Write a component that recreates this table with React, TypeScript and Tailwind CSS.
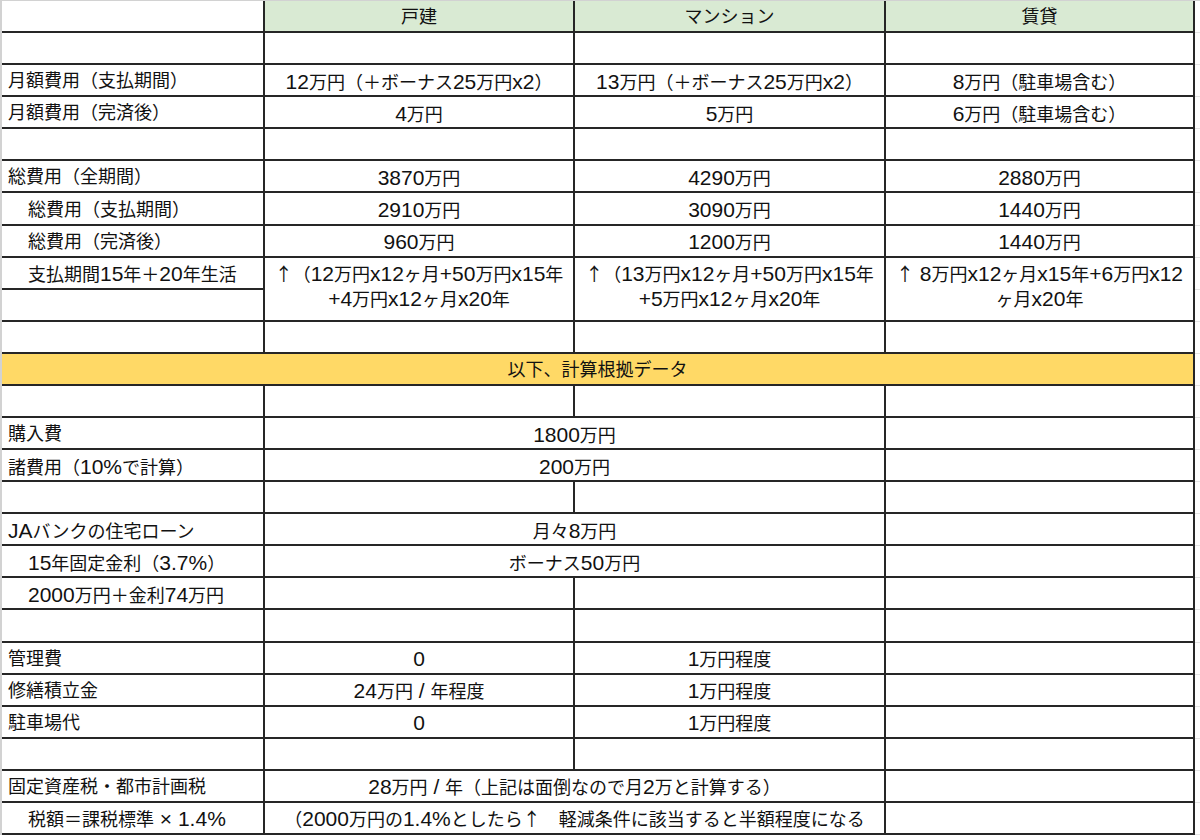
import type { ReactNode } from 'react';

type Cell = {
  text?: string;
  second?: string;
  span?: 2 | 4;
  left?: boolean;
  indent?: boolean;
  bg?: 'green' | 'yellow';
};

// the sheet renders latin runs a bit larger than the kana/kanji around them,
// and the arrow comes from the CJK font
const RUNS = /([0-9A-Za-z.%+/× ]+|↑)/;

function Mixed({ text }: { text: string }): ReactNode {
  return text.split(RUNS).map((part, i) => {
    if (i % 2 === 0) return part;
    if (part === '↑')
      return (
        <span key={i} className="font-['Noto_Sans_CJK_JP',sans-serif]">
          {part}
        </span>
      );
    return (
      <span key={i} className="text-[21px]">
        {part}
      </span>
    );
  });
}

const label = (text: string, indent = false): Cell => ({ text, left: true, indent });
const empty: Cell = {};

const ROWS: Cell[][] = [
  [empty, { text: '戸建', bg: 'green' }, { text: 'マンション', bg: 'green' }, { text: '賃貸', bg: 'green' }],
  [empty, empty, empty, empty],
  [label('月額費用（支払期間）'), { text: '12万円（＋ボーナス25万円x2）' }, { text: '13万円（＋ボーナス25万円x2）' }, { text: '8万円（駐車場含む）' }],
  [label('月額費用（完済後）'), { text: '4万円' }, { text: '5万円' }, { text: '6万円（駐車場含む）' }],
  [empty, empty, empty, empty],
  [label('総費用（全期間）'), { text: '3870万円' }, { text: '4290万円' }, { text: '2880万円' }],
  [label('総費用（支払期間）', true), { text: '2910万円' }, { text: '3090万円' }, { text: '1440万円' }],
  [label('総費用（完済後）', true), { text: '960万円' }, { text: '1200万円' }, { text: '1440万円' }],
  [
    label('支払期間15年＋20年生活', true),
    { text: '↑（12万円x12ヶ月+50万円x15年', second: '+4万円x12ヶ月x20年' },
    { text: '↑（13万円x12ヶ月+50万円x15年', second: '+5万円x12ヶ月x20年' },
    { text: '↑ 8万円x12ヶ月x15年+6万円x12', second: 'ヶ月x20年' },
  ],
  [empty],
  [empty, empty, empty, empty],
  [{ text: '以下、計算根拠データ', span: 4, bg: 'yellow' }],
  [empty, empty, empty, empty],
  [label('購入費'), { text: '1800万円', span: 2 }, empty],
  [label('諸費用（10%で計算）'), { text: '200万円', span: 2 }, empty],
  [empty, empty, empty, empty],
  [label('JAバンクの住宅ローン'), { text: '月々8万円', span: 2 }, empty],
  [label('15年固定金利（3.7%）', true), { text: 'ボーナス50万円', span: 2 }, empty],
  [label('2000万円＋金利74万円', true), empty, empty, empty],
  [empty, empty, empty, empty],
  [label('管理費'), { text: '0' }, { text: '1万円程度' }, empty],
  [label('修繕積立金'), { text: '24万円 / 年程度' }, { text: '1万円程度' }, empty],
  [label('駐車場代'), { text: '0' }, { text: '1万円程度' }, empty],
  [empty, empty, empty, empty],
  [label('固定資産税・都市計画税'), { text: '28万円 / 年（上記は面倒なので月2万と計算する）', span: 2 }, empty],
  [
    label('税額＝課税標準 × 1.4%', true),
    { text: '（2000万円の1.4%としたら↑　軽減条件に該当すると半額程度になる', span: 2 },
    empty,
  ],
];

function SheetCell({ cell }: { cell: Cell }) {
  const classes = ['flex overflow-hidden whitespace-nowrap border-r-2 border-b-2 border-[#262626]'];

  if (cell.span === 2) classes.push('col-span-2');
  if (cell.span === 4) classes.push('col-span-4');
  if (cell.second) classes.push('row-span-2 flex-col items-center justify-start pt-[4px] leading-[23px]');
  else if (cell.left) classes.push(cell.indent ? 'items-center pt-[2px] pl-[26px] leading-none' : 'items-center pt-[2px] pl-[6px] leading-none');
  else classes.push('items-center justify-center pt-[2px] leading-none');

  if (cell.bg === 'green') classes.push('bg-[#d9ead3]');
  if (cell.bg === 'yellow') classes.push('bg-[#ffd966]');

  return (
    <div className={classes.join(' ')}>
      {cell.second ? (
        <>
          <span>
            <Mixed text={cell.text ?? ''} />
          </span>
          <span>
            <Mixed text={cell.second} />
          </span>
        </>
      ) : (
        <span>
          <Mixed text={cell.text ?? ''} />
        </span>
      )}
    </div>
  );
}

export default function App() {
  return (
    <main className="h-[840px] w-[1200px] overflow-hidden bg-white font-['Liberation_Sans','Noto_Sans_CJK_JP',sans-serif] text-[18px] text-[#111]">
      <div className="border-t border-l-2 border-[#d2d2d2]">
        <div className="grid auto-rows-[32.08px] grid-cols-[263px_310px_311px_309px_1fr]">
          {ROWS.map((row, r) => (
            <div key={r} className="contents">
              {row.map((cell, c) => (
                <SheetCell key={c} cell={cell} />
              ))}
              <div className="border-b border-[#e4e4e4]" />
            </div>
          ))}
        </div>
      </div>
    </main>
  );
}
